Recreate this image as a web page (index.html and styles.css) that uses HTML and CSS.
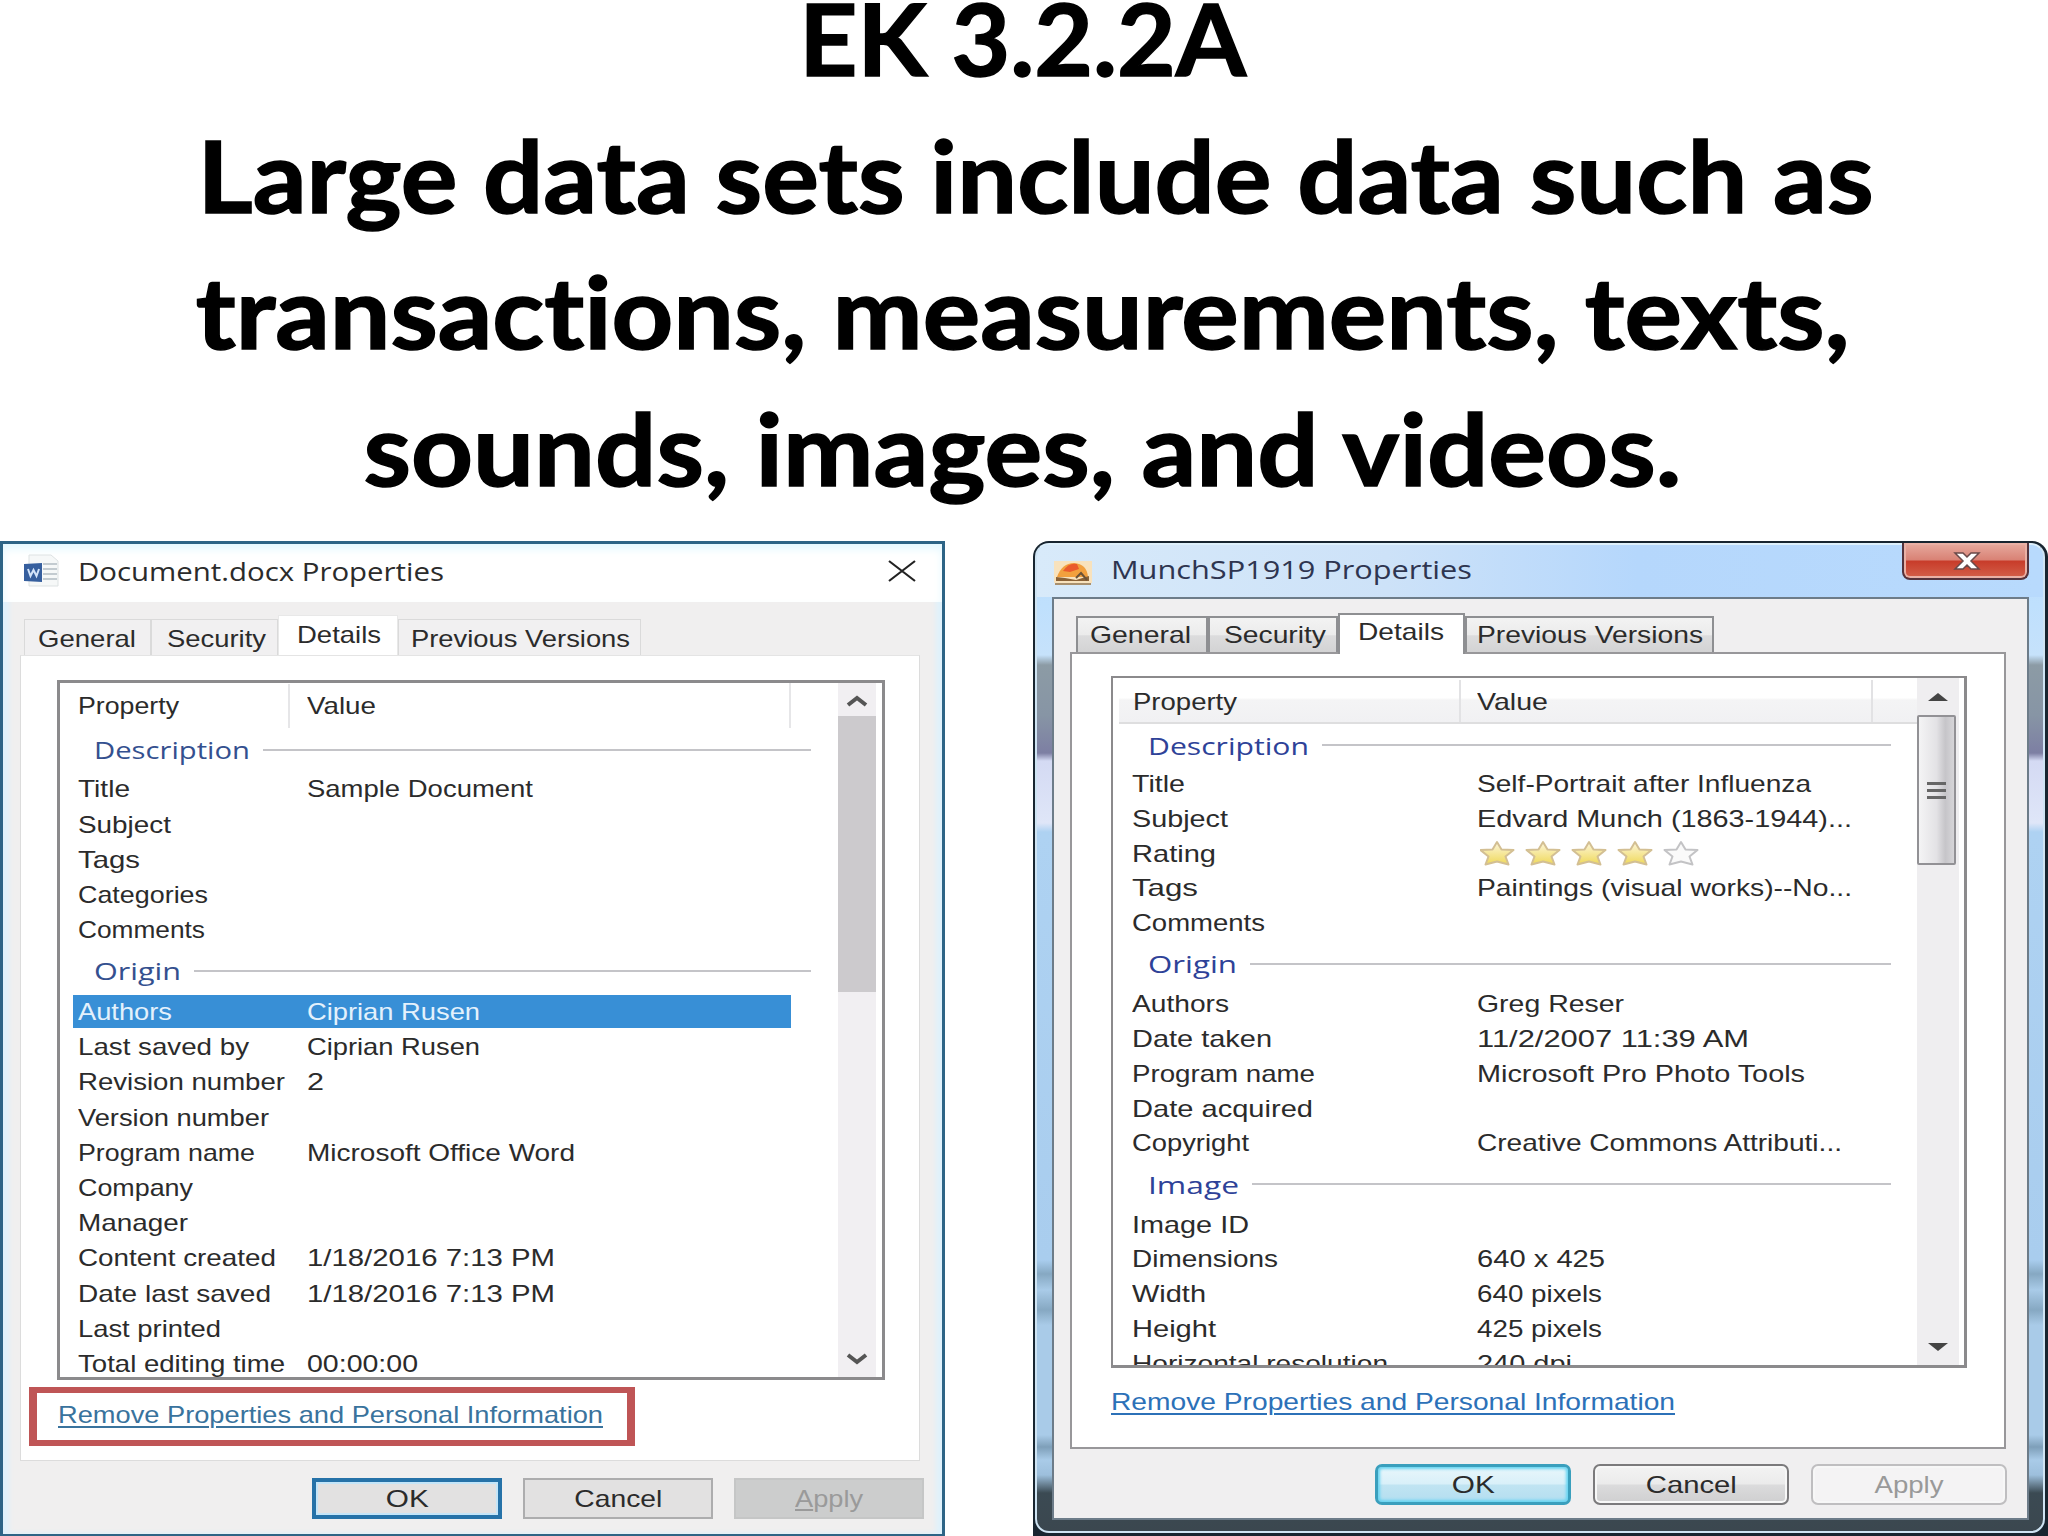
FILE: index.html
```
<!DOCTYPE html>
<html>
<head>
<meta charset="UTF-8">
<title>EK 3.2.2A</title>
<link rel="stylesheet" href="styles.css">
</head>
<body onload="fitText();">

<h1 class="heading">
<div><span data-w="447">EK 3.2.2A</span></div>
<div class="second"><span data-w="1676">Large data sets include data such as</span></div>
<div><span data-w="1654">transactions, measurements, texts,</span></div>
<div><span data-w="1318">sounds, images, and videos.</span></div>
</h1>

<div class="dialogs">

<!-- Document.docx -->
<div class="win10">
  <div class="titlebar">
    <svg class="appIcon" width="38" height="34" viewBox="0 0 38 34">
      <path d="M6 1h22l7 6v25H6z" fill="#f6f8f8" stroke="#dde2e3"/>
      <path d="M20 10h14M20 15h14M20 20h14M20 25h14" stroke="#c3cbd0" stroke-width="2"/>
      <path d="M1 10l18-1v19l-18-1z" fill="#365f9e"/>
      <path d="M5 15l2.500 7 3-6 3 6 2.500-7" fill="none" stroke="#d3e4fa" stroke-width="2"/>
    </svg>
    <span class="caption" data-w="366">Document.docx Properties</span>
    <svg class="close" width="28" height="22" viewBox="0 0 28 22"><path d="M1 1l26 20M27 1L1 21" stroke="#222" stroke-width="2.200"/></svg>
  </div>
  <div class="tabs">
    <div class="tab general"><span data-w="98">General</span></div>
    <div class="tab security"><span data-w="99">Security</span></div>
    <div class="tab details active"><span data-w="84">Details</span></div>
    <div class="tab versions"><span data-w="219">Previous Versions</span></div>
  </div>
  <div class="panel">
    <div class="list">
      <div class="rows">
        <div class="head"><div class="name"><span data-w="101">Property</span></div><div class="value"><span data-w="69">Value</span></div></div>
        <div class="group first"><span data-w="156">Description</span><hr></div>
        <div class="row"><div class="name"><span data-w="52">Title</span></div><div class="value"><span data-w="226">Sample Document</span></div></div>
        <div class="row"><div class="name"><span data-w="93">Subject</span></div></div>
        <div class="row"><div class="name"><span data-w="62">Tags</span></div></div>
        <div class="row"><div class="name"><span data-w="130">Categories</span></div></div>
        <div class="row"><div class="name"><span data-w="127">Comments</span></div></div>
        <div class="group"><span data-w="87">Origin</span><hr></div>
        <div class="row selected"><div class="name"><span data-w="94">Authors</span></div><div class="value"><span data-w="173">Ciprian Rusen</span></div></div>
        <div class="row"><div class="name"><span data-w="171">Last saved by</span></div><div class="value"><span data-w="173">Ciprian Rusen</span></div></div>
        <div class="row"><div class="name"><span data-w="207">Revision number</span></div><div class="value"><span data-w="17">2</span></div></div>
        <div class="row"><div class="name"><span data-w="191">Version number</span></div></div>
        <div class="row"><div class="name"><span data-w="177">Program name</span></div><div class="value"><span data-w="268">Microsoft Office Word</span></div></div>
        <div class="row"><div class="name"><span data-w="115">Company</span></div></div>
        <div class="row"><div class="name"><span data-w="110">Manager</span></div></div>
        <div class="row"><div class="name"><span data-w="198">Content created</span></div><div class="value"><span data-w="248">1/18/2016 7:13 PM</span></div></div>
        <div class="row"><div class="name"><span data-w="193">Date last saved</span></div><div class="value"><span data-w="248">1/18/2016 7:13 PM</span></div></div>
        <div class="row"><div class="name"><span data-w="143">Last printed</span></div></div>
        <div class="row"><div class="name"><span data-w="207">Total editing time</span></div><div class="value"><span data-w="111">00:00:00</span></div></div>
      </div>
      <div class="scrollbar">
        <svg width="22" height="14" viewBox="0 0 22 14"><path d="M2 11l9-7 9 7" fill="none" stroke="#555" stroke-width="4"/></svg>
        <div class="thumb"></div>
        <svg class="down" width="22" height="14" viewBox="0 0 22 14"><path d="M2 3l9 7 9-7" fill="none" stroke="#555" stroke-width="4"/></svg>
      </div>
    </div>
    <div class="linkBox"><a class="link" data-w="545">Remove Properties and Personal Information</a></div>
  </div>
  <div class="buttons">
    <div class="button ok"><span data-w="43">OK</span></div>
    <div class="button"><span data-w="88">Cancel</span></div>
    <div class="button disabled"><span data-w="68"><u>A</u>pply</span></div>
  </div>
</div>

<!-- MunchSP1919 -->
<div class="win7">
 <div class="glass">
  <div class="titlebar">
    <svg class="appIcon" width="38" height="26" viewBox="0 0 38 26">
      <rect x="0" y="1" width="38" height="22" fill="#f8e2bd"/>
      <path d="M3 17Q8 3 20 3q13 1 14 14z" fill="#f2a03e"/>
      <path d="M9 11q6-9 14-7l2 5-9 3z" fill="#ea5a2c"/>
      <path d="M2 17l9 1 11 2 13-4v5H2z" fill="#8a6238"/>
      <path d="M22 18l5-5 6 7" fill="none" stroke="#6b5238" stroke-width="2"/>
      <path d="M1 24h36" stroke="#a8906f" stroke-width="2"/>
    </svg>
    <span class="caption" data-w="361">MunchSP1919 Properties</span>
    <div class="close"><svg width="30" height="20" viewBox="0 0 30 20"><path d="M3 2h8l4 4 4-4h8l-8 8 8 8h-8l-4-4-4 4H3l8-8z" fill="#fff" stroke="#6a4a4a" stroke-width="1.500"/></svg></div>
  </div>
  <div class="client">
    <div class="tabs">
      <div class="tab general"><span data-w="101">General</span></div>
      <div class="tab security"><span data-w="102">Security</span></div>
      <div class="tab details active"><span data-w="86">Details</span></div>
      <div class="tab versions"><span data-w="226">Previous Versions</span></div>
    </div>
    <div class="panel">
      <div class="list">
        <div class="rows">
          <div class="head"><div class="name"><span data-w="104">Property</span></div><div class="value"><span data-w="71">Value</span></div></div>
          <div class="group first"><span data-w="161">Description</span><hr></div>
          <div class="row"><div class="name"><span data-w="53">Title</span></div><div class="value"><span data-w="334">Self-Portrait after Influenza</span></div></div>
          <div class="row"><div class="name"><span data-w="96">Subject</span></div><div class="value"><span data-w="375">Edvard Munch (1863-1944)...</span></div></div>
          <div class="row"><div class="name"><span data-w="84">Rating</span></div><div class="value">
            <svg class="stars" width="222" height="28" viewBox="0 0 222 28">
              <defs>
                <linearGradient id="gold" x1="0" y1="0" x2="0" y2="1"><stop offset="0" stop-color="#fdf6dc"/><stop offset="1" stop-color="#efd95a"/></linearGradient>
                <path id="star" d="M17 2l4.500 7.500 12 .5-8 6.500 3 8-11.500-3-11.500 3 3-8-8-6.500 12-.5z" stroke-width="2" stroke-linejoin="round"/>
              </defs>
              <g fill="url(#gold)" stroke="#d3bf93">
                <use href="#star"/><use href="#star" x="46"/><use href="#star" x="92"/><use href="#star" x="138"/>
              </g>
              <use href="#star" x="184" fill="#fafafa" stroke="#c3c3c5"/>
            </svg></div></div>
          <div class="row"><div class="name"><span data-w="66">Tags</span></div><div class="value"><span data-w="375">Paintings (visual works)--No...</span></div></div>
          <div class="row"><div class="name"><span data-w="133">Comments</span></div></div>
          <div class="group"><span data-w="89">Origin</span><hr></div>
          <div class="row"><div class="name"><span data-w="97">Authors</span></div><div class="value"><span data-w="147">Greg Reser</span></div></div>
          <div class="row"><div class="name"><span data-w="140">Date taken</span></div><div class="value"><span data-w="272">11/2/2007 11:39 AM</span></div></div>
          <div class="row"><div class="name"><span data-w="183">Program name</span></div><div class="value"><span data-w="328">Microsoft Pro Photo Tools</span></div></div>
          <div class="row"><div class="name"><span data-w="181">Date acquired</span></div></div>
          <div class="row"><div class="name"><span data-w="117">Copyright</span></div><div class="value"><span data-w="365">Creative Commons Attributi...</span></div></div>
          <div class="group"><span data-w="91">Image</span><hr></div>
          <div class="row"><div class="name"><span data-w="117">Image ID</span></div></div>
          <div class="row"><div class="name"><span data-w="146">Dimensions</span></div><div class="value"><span data-w="128">640 x 425</span></div></div>
          <div class="row"><div class="name"><span data-w="74">Width</span></div><div class="value"><span data-w="125">640 pixels</span></div></div>
          <div class="row"><div class="name"><span data-w="84">Height</span></div><div class="value"><span data-w="125">425 pixels</span></div></div>
          <div class="row"><div class="name"><span data-w="256">Horizontal resolution</span></div><div class="value"><span data-w="95">240 dpi</span></div></div>
        </div>
        <div class="scrollbar">
          <svg width="20" height="10" viewBox="0 0 20 10"><path d="M0 9l10-8 10 8z" fill="#444"/></svg>
          <div class="thumb"><i></i><i></i><i></i></div>
          <svg class="down" width="20" height="8" viewBox="0 0 20 8"><path d="M0 0h20l-10 8z" fill="#444"/></svg>
        </div>
      </div>
      <a class="link" data-w="564">Remove Properties and Personal Information</a>
    </div>
    <div class="buttons">
      <div class="button ok"><span data-w="43">OK</span></div>
      <div class="button"><span data-w="91">Cancel</span></div>
      <div class="button disabled"><span data-w="69">Apply</span></div>
    </div>
  </div>
 </div>
</div>

</div>
<script src="fit.js"></script>
</body>
</html>
```
FILE: styles.css
```
* {
    box-sizing: border-box;
}

body {
    margin: 0;
    width: 2048px;
    height: 1536px;
    overflow: hidden;
    background: #fff;
    color: #2b2b2b;
    font-family: "Liberation Sans", Arial, sans-serif;
    font-size: 24px;
}

[data-w] {
    display: inline-block;
    flex: none;
    white-space: nowrap;
    transform-origin: left center;
}

/* heading */
.heading {
    height: 541px;
    margin: -31px 0 31px;
    padding-right: 3px;
    font-family: Lato, sans-serif;
    font-size: 100px;
    font-weight: bold;
    font-variant-ligatures: none;
    line-height: 136.500px;
    color: #000;
    -webkit-text-stroke: 1.500px #000;
}

.heading div {
    display: flex;
    justify-content: center;
}

.heading span {
    transform-origin: center;
}

.heading .second {
    padding-left: 27px;
}

.dialogs {
    display: flex;
    justify-content: space-between;
    height: 995px;
}

/* shared parts */
.titlebar, .tabs, .tab, .head, .row, .group, .buttons, .button, .name, .value, .linkBox {
    display: flex;
    align-items: center;
}

.caption {
    font-family: "Open Sans", sans-serif;
    font-size: 25px;
}

.list {
    display: flex;
    overflow: hidden;
    border: 3px solid #8b8a8c;
    background: #fff;
}

.rows {
    flex: 1;
}

.row {
    white-space: nowrap;
}

.name {
    flex: none;
}

.group span {
    font-family: "Open Sans", sans-serif;
    color: #34508f;
}

.group hr {
    flex: 1;
    height: 2px;
    margin: 0;
    border: 0;
    background: #c4c4c8;
}

.scrollbar {
    display: flex;
    flex-direction: column;
    align-items: center;
}

.scrollbar .down {
    margin-top: auto;
}

.link {
    text-decoration: underline;
    text-decoration-thickness: 2px;
    text-underline-offset: 3px;
}

.button {
    justify-content: center;
    height: 41px;
}

.button span {
    transform-origin: center;
}

/* Windows 10 dialog */
.win10 {
    width: 945px;
    border: 3px solid #2d6486;
    border-bottom-width: 2px;
    background: #f0efef;
    box-shadow: inset 6px 0 5px #dff1fb, inset -6px 0 5px #dff1fb;
}

.win10 .titlebar {
    height: 58px;
    padding: 0 26px 4px 20px;
    background: #fff;
    box-shadow: inset 0 5px 8px #e3f8ff;
}

.win10 .caption {
    margin-left: 17px;
}

.win10 .close {
    margin: 0 0 0 auto;
}

.win10 .tabs {
    height: 53px;
    padding-left: 21px;
    align-items: flex-end;
}

.win10 .tab {
    height: 36px;
    border: 1px solid #dadada;
    border-bottom: 0;
    padding: 3px 0 0 13px;
    background: #f1f0f1;
}

.win10 .general { width: 127px; }
.win10 .security { width: 127px; padding-left: 15px; }
.win10 .versions { width: 243px; padding-left: 12px; }

.win10 .details {
    width: 120px;
    height: 40px;
    padding: 0 0 2px 18px;
    background: #fff;
    border-color: #e8e8e8;
}

.win10 .panel {
    width: 900px;
    height: 806px;
    margin-left: 17px;
    padding: 24px 0 0 8px;
    border: 1px solid #dcdcdc;
    border-top-color: #e4e4e4;
    background: #fff;
}

.win10 .list {
    width: 828px;
    height: 700px;
    margin-left: 28px;
}

.win10 .head {
    height: 45px;
    width: 731px;
    padding-top: 1px;
    border-right: 2px solid #e6e6e8;
}

.win10 .head .name {
    height: 44px;
    border-right: 2px solid #e6e6e8;
}

.win10 .head .name, .win10 .row .name {
    width: 230px;
    padding-left: 18px;
}

.win10 .head .value, .win10 .row .value {
    padding-left: 17px;
}

.win10 .row {
    height: 35.200px;
    padding-top: 1px;
}

.win10 .group {
    height: 46.600px;
    padding-left: 34px;
    width: 751px;
    gap: 13px;
}

.win10 .group.first {
    height: 43.400px;
}

.win10 .selected {
    width: 718px;
    height: 33px;
    margin: 1px 0 1.200px 13px;
    background: #388fd6;
    color: #e4f1fc;
}

.win10 .selected .name {
    width: 217px;
    padding-left: 5px;
}

.win10 .scrollbar {
    width: 38px;
    margin-right: 6px;
    padding: 11px 0;
    background: #f1eff2;
}

.win10 .thumb {
    width: 38px;
    height: 276px;
    margin-top: 8px;
    background: #cccacd;
}

.win10 .linkBox {
    width: 606px;
    height: 59px;
    margin-top: 7px;
    padding-left: 21px;
    padding-bottom: 3px;
    border: 6px solid #bf5556;
    border-width: 6px 8px;
}

.win10 .link {
    color: #39739d;
}

.win10 .buttons {
    gap: 21px;
    padding: 17px 0 0 309px;
}

.win10 .button {
    width: 190px;
    border: 2px solid #adadae;
    background: #e2e1e1;
}

.win10 .ok {
    border: 4px solid #2672a8;
    box-shadow: inset 0 0 0 2px #c4e5f8;
}

.win10 .disabled {
    border-color: #c5c6c6;
    background: #cccdcd;
    color: #9a9a9a;
}

/* Windows 7 dialog */
.win7 {
    width: 1015px;
    padding: 2px 3px 3px 2px;
    border-radius: 16px 16px 0 0;
    background: #182530;
}

.glass {
    height: 990px;
    padding: 0 14px 13px 15px;
    border: 2px solid #cfe4f3;
    border-top-color: #def0fb;
    border-radius: 14px;
    background: linear-gradient(#bcdcfb 0, #bfe0fd 60px, #c6e2fb 110px, #8c9ba5 120px, #8795a5 170px, #7d7fa3 208px, #d4daf3 216px, #dfe6f8 278px, #aed2f2 287px, #a9cdee 715px, #86a8c2 729px, #a9cbe8 745px, #86a8c2 765px, #a9cbe8 780px, #a9cbe8 890px, #7e9fb9 902px, #a9cbe8 915px, #9dbfdc 930px, #3b4a53 948px, #3b474f 100%);
}

.win7 .titlebar {
    height: 52px;
    align-items: flex-start;
    margin: 0 -14px 0 -15px;
    padding-left: 17px;
    border-radius: 12px 12px 0 0;
    background: linear-gradient(90deg, #d8eafa, #cde2f8 350px, #b5d7fc 600px, #b8dafd);
}

.win7 .appIcon {
    margin-top: 15px;
}

.win7 .caption {
    margin: 7px 0 0 19px;
    color: #2e3550;
}

.win7 .close {
    display: flex;
    align-items: center;
    justify-content: center;
    width: 127px;
    height: 37px;
    margin: -2px 14px 0 auto;
    padding-left: 3px;
    border: 2px solid #54333c;
    border-top: 0;
    border-radius: 0 0 8px 8px;
    background: linear-gradient(#e7ab9f, #d98275 48%, #c83c2a 52%, #d3604a);
    box-shadow: inset 0 0 0 2px #e9b0a5;
}

.client {
    height: 923px;
    border: 2px solid #6d7c89;
    background: #f0eff0;
}

.win7 .tabs {
    height: 53px;
    padding-left: 22px;
    align-items: flex-end;
}

.win7 .tab {
    height: 36px;
    border: 2px solid #8e8f92;
    border-bottom: 0;
    padding-left: 12px;
    background: linear-gradient(#f3f3f3, #ebebeb 50%, #dcdcdd 52%, #d3d3d4);
}

.win7 .general { width: 132px; }
.win7 .security { width: 130px; padding-left: 14px; }
.win7 .versions { width: 249px; padding-left: 10px; }

.win7 .details {
    width: 127px;
    height: 41px;
    margin-bottom: -2px;
    padding: 0 0 5px 18px;
    background: #fff;
    z-index: 1;
}

.win7 .panel {
    width: 936px;
    height: 797px;
    margin-left: 16px;
    padding: 22px 0 0 39px;
    border: 2px solid #98979a;
    background: #fff;
}

.win7 .list {
    width: 856px;
    height: 692px;
    border-width: 2px 3px 3px 2px;
}

.win7 .head {
    height: 46px;
    margin-left: 6px;
    padding-top: 2px;
    border-bottom: 2px solid #dededf;
    background: linear-gradient(#fff 45%, #f4f4f5 50%, #f1f1f3);
}

.win7 .head .name {
    width: 342px;
    height: 42px;
    padding-left: 14px;
    border-right: 2px solid #e2e2e4;
}

.win7 .head .value {
    width: 412px;
    height: 42px;
    padding-left: 16px;
    border-right: 2px solid #e2e2e4;
}

.win7 .head span {
    position: relative;
    top: 1px;
}

.win7 .row {
    height: 34.800px;
}

.win7 .row .name {
    width: 364px;
    padding-left: 19px;
}

.win7 .stars {
    margin-left: 3px;
}

.win7 .group {
    width: 778px;
    height: 46.300px;
    padding-left: 35px;
    gap: 13px;
}

.win7 .group.first {
    height: 42.600px;
}

.win7 .group span {
    color: #2e4298;
}

.win7 .scrollbar {
    width: 42px;
    margin-right: 5px;
    padding: 14px 0 14px;
    background: #efeef0;
}

.win7 .thumb {
    display: flex;
    flex-direction: column;
    align-items: center;
    justify-content: center;
    gap: 4px;
    width: 39px;
    height: 150px;
    margin: 13px 3px 0 0;
    border: 2px solid #929195;
    border-radius: 2px;
    background: linear-gradient(90deg, #f4f4f5, #e3e2e5 50%, #c6c5c9 75%, #d6d5d8);
}

.win7 .thumb i {
    width: 19px;
    height: 3px;
    background: #666;
}

.win7 .link {
    margin-top: 20px;
    color: #2c71b8;
}

.win7 .buttons {
    gap: 22px;
    padding: 15px 0 0 321px;
}

.win7 .button {
    width: 196px;
    border: 2px solid #7b7a7c;
    border-radius: 7px;
    background: linear-gradient(#f3f3f3, #ebebeb 48%, #dbdbdc 52%, #cfcfd0);
    box-shadow: inset 0 0 0 2px #f7f7f7;
}

.win7 .ok {
    border: 3px solid #3a9fbd;
    background: linear-gradient(#e8f6fb, #d9f0f9 48%, #c0e4f2 52%, #b4def0);
    box-shadow: inset 0 0 3px 2px #66d4f2;
}

.win7 .disabled {
    border-color: #bfbec0;
    background: #f4f3f4;
    color: #999;
}
```
FILE: fit.js
```
// stretch each label to the width it takes in its dialog
function fitText()
{
    var items = document.querySelectorAll("[data-w]");
    for (var i = 0; i < items.length; i++) {
        var obj = items[i];
        var width = obj.getBoundingClientRect().width;
        var scale = obj.dataset.w / width;
        obj.style.transform = "scaleX(" + scale + ")";
        // group rules start after the stretched label
        if (obj.nextElementSibling && obj.nextElementSibling.tagName == "HR")
            obj.style.marginRight = (obj.dataset.w - width) + "px";
    }
}
```
